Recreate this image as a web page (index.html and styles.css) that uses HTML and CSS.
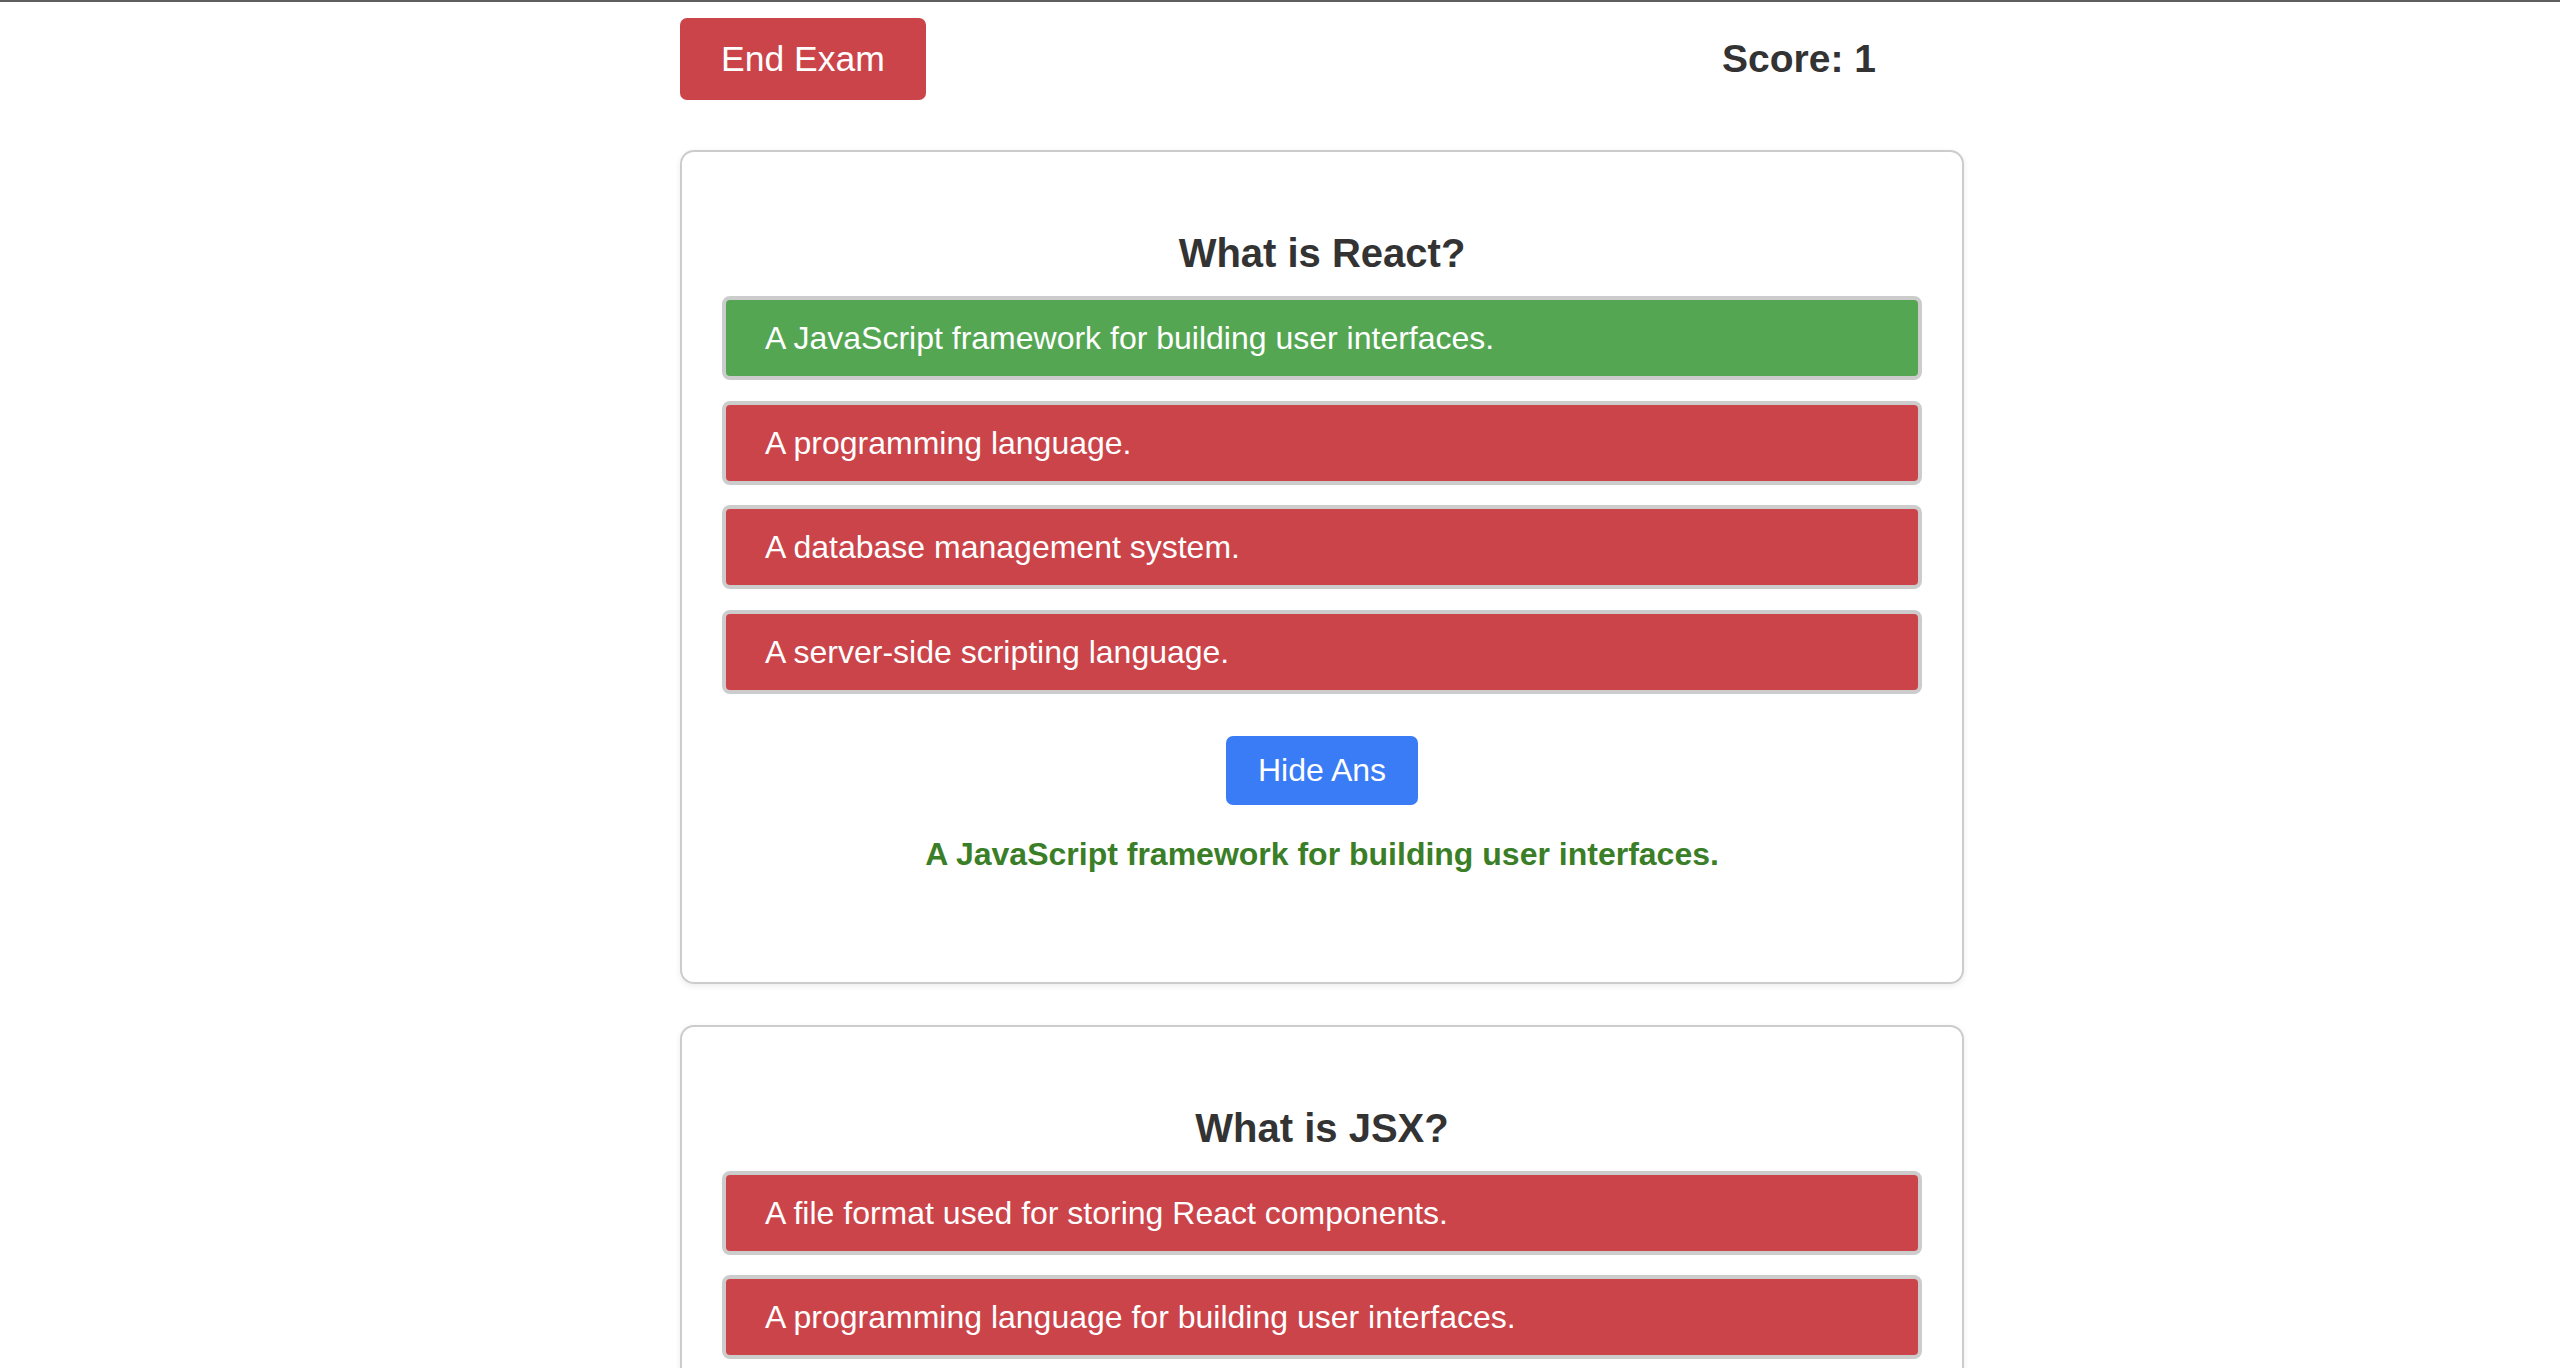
FILE: index.html
```html
<!DOCTYPE html>
<html lang="en">
<head>
<meta charset="utf-8">
<title>Exam</title>
<link rel="stylesheet" href="styles.css">
</head>
<body>
<div class="page">
  <header class="topbar">
    <button class="end-btn">End Exam</button>
    <div class="score">Score: 1</div>
  </header>

  <section class="card">
    <h2 class="question">What is React?</h2>
    <div class="options">
      <div class="option correct">A JavaScript framework for building user interfaces.</div>
      <div class="option wrong">A programming language.</div>
      <div class="option wrong">A database management system.</div>
      <div class="option wrong">A server-side scripting language.</div>
    </div>
    <button class="ans-btn">Hide Ans</button>
    <p class="answer">A JavaScript framework for building user interfaces.</p>
  </section>

  <section class="card">
    <h2 class="question">What is JSX?</h2>
    <div class="options">
      <div class="option wrong">A file format used for storing React components.</div>
      <div class="option wrong">A programming language for building user interfaces.</div>
      <div class="option correct">A syntax extension for JavaScript that looks like HTML.</div>
      <div class="option wrong">A styling library for React applications.</div>
    </div>
    <button class="ans-btn">Hide Ans</button>
    <p class="answer">A syntax extension for JavaScript that looks like HTML.</p>
  </section>
</div>
</body>
</html>
```

FILE: styles.css
```css
html {
  scrollbar-width: none;
}
html::-webkit-scrollbar {
  display: none;
}
body {
  margin: 0;
  border-top: 2px solid #5f5f5f;
  background: #ffffff;
  font-family: "Liberation Sans", Arial, sans-serif;
  color: #333333;
}
.page {
  width: 1284px;
  margin-left: 680px;
  padding-bottom: 40px;
}
.topbar {
  display: flex;
  justify-content: space-between;
  align-items: center;
  margin-top: 16px;
}
.end-btn {
  height: 82px;
  padding: 0 41px;
  border: none;
  border-radius: 7px;
  background: #cb444a;
  color: #ffffff;
  font-family: "Liberation Sans", Arial, sans-serif;
  font-size: 35.5px;
  line-height: 42px;
  cursor: pointer;
}
.score {
  margin-right: 88px;
  font-size: 39px;
  font-weight: bold;
  line-height: 46px;
  color: #333333;
}
.card {
  margin-top: 50px;
  border: 2px solid #cccccc;
  border-radius: 14px;
  padding: 78px 40px 109px;
  box-shadow: 0 2px 6px rgba(0, 0, 0, 0.08);
  display: flex;
  flex-direction: column;
  align-items: center;
}
.card + .card {
  margin-top: 41px;
}
.question {
  margin: 0 0 20px;
  font-size: 40px;
  line-height: 46px;
  font-weight: bold;
  color: #333333;
}
.options {
  align-self: stretch;
  display: flex;
  flex-direction: column;
  gap: 20.5px;
}
.option {
  border: 4px solid #cccccc;
  border-radius: 8px;
  padding: 20px 39px;
  font-size: 32px;
  line-height: 36px;
  color: #ffffff;
}
.option.correct {
  background: #54a653;
}
.option.wrong {
  background: #cb444a;
}
.ans-btn {
  margin-top: 42px;
  padding: 16px 32px;
  border: none;
  border-radius: 7px;
  background: #3a7cf6;
  color: #ffffff;
  font-family: "Liberation Sans", Arial, sans-serif;
  font-size: 32px;
  line-height: 37px;
  cursor: pointer;
}
.answer {
  margin: 31px 0 0;
  font-size: 32px;
  line-height: 37px;
  font-weight: bold;
  color: #3a7e27;
}
```
